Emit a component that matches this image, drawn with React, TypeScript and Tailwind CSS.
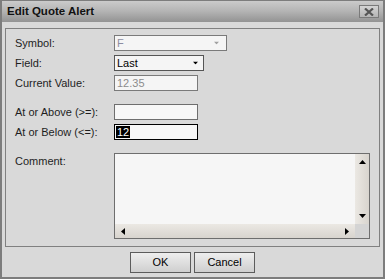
import React from "react";

function Tri({ dir, className }: { dir: "up" | "down" | "left" | "right"; className?: string }) {
  const pts = {
    up: "0,4 7,4 3.5,0",
    down: "0,0 7,0 3.5,4",
    left: "4,0 4,7 0,3.5",
    right: "0,0 0,7 4,3.5",
  }[dir];
  const vert = dir === "up" || dir === "down";
  return (
    <svg width={vert ? 7 : 4} height={vert ? 4 : 7} className={className}>
      <polygon points={pts} fill="currentColor" />
    </svg>
  );
}

function Row({ label, children }: { label: string; children: React.ReactNode }) {
  return (
    <div className="flex items-center h-[16px]">
      <span className="w-[99px] shrink-0">{label}</span>
      {children}
    </div>
  );
}

export default function App() {
  return (
    <div className="w-[385px] h-[279px] flex flex-col bg-[#d9d9d9] border-x-2 border-b-2 border-t border-[#7d7d7d] font-['Liberation_Sans',Arial,sans-serif] text-[11px] leading-none text-[#1e1e1e]">
      {/* title bar */}
      <div className="h-[21px] shrink-0 flex items-center justify-between pl-[5px] pr-[4px] bg-gradient-to-b from-[#cbcbcb] via-[#b3b3b3] to-[#939393]">
        <span className="font-bold text-[11.5px] text-[#111]">Edit Quote Alert</span>
        <div className="w-[20px] h-[13px] flex items-center justify-center border border-[#7a7a7a] bg-gradient-to-b from-[#d4d4d4] to-[#b4b4b4]">
          <svg width="10" height="8" viewBox="0 0 10 8">
            <path d="M1 0.5 L9 7.5 M9 0.5 L1 7.5" stroke="#555" strokeWidth="2.2" />
          </svg>
        </div>
      </div>

      {/* group box */}
      <div className="mx-[3px] mt-[6px] h-[219px] shrink-0 border border-[#808080] pt-[6px] pl-[9px] flex flex-col">
        <div className="flex flex-col gap-[4px]">
          <Row label="Symbol:">
            <div className="w-[113px] h-[16px] border border-[#7a7a7a] bg-[#f5f5f5] flex items-center justify-between pl-[2px] pr-[6px] text-[#8c8ca0]">
              <span>F</span>
              <Tri dir="down" className="text-[#a0a0a0] scale-75" />
            </div>
          </Row>
          <Row label="Field:">
            <div className="w-[90px] h-[16px] border border-[#555] bg-[#f5f5f5] flex items-center justify-between pl-[2px] pr-[4px] text-black">
              <span>Last</span>
              <Tri dir="down" className="text-black scale-75" />
            </div>
          </Row>
          <Row label="Current Value:">
            <div className="w-[84px] h-[16px] border border-[#7a7a7a] bg-[#f5f5f5] flex items-center pl-[2px] text-[#8c8c8c]">
              12.35
            </div>
          </Row>
        </div>

        <div className="flex flex-col gap-[4px] mt-[13px]">
          <Row label="At or Above (>=):">
            <div className="w-[84px] h-[16px] border border-[#6e6e6e] bg-[#f7f7f7]" />
          </Row>
          <Row label="At or Below (<=):">
            <div className="w-[84px] h-[16px] border border-black bg-[#f7f7f7] flex items-center pl-[1px]">
              <span className="bg-black text-white px-[1px] h-[12px] flex items-center">12</span>
            </div>
          </Row>
        </div>

        <div className="flex mt-[13px]">
          <span className="w-[99px] shrink-0 pt-[3px]">Comment:</span>
          <div className="w-[256px] h-[86px] border border-[#6e6e6e] bg-[#f6f6f6] grid grid-cols-[1fr_14px] grid-rows-[1fr_14px]">
            <div />
            <div className="bg-gradient-to-r from-[#ebe8e3] to-[#d8d4ce] flex flex-col items-center justify-between py-[6px] text-black">
              <Tri dir="up" />
              <Tri dir="down" />
            </div>
            <div className="bg-gradient-to-b from-[#ebe8e3] to-[#d8d4ce] flex items-center justify-between px-[6px] text-black">
              <Tri dir="left" />
              <Tri dir="right" />
            </div>
            <div className="bg-[#d4d4d4]" />
          </div>
        </div>
      </div>

      {/* buttons */}
      <div className="flex justify-center gap-[3px] mt-[5px]">
        <button className="w-[61px] h-[21px] border border-[#5c5c5c] bg-gradient-to-b from-[#eeeeee] to-[#cfcfcf] text-black">
          OK
        </button>
        <button className="w-[61px] h-[21px] border border-[#5c5c5c] bg-gradient-to-b from-[#eeeeee] to-[#cfcfcf] text-black">
          Cancel
        </button>
      </div>
    </div>
  );
}
